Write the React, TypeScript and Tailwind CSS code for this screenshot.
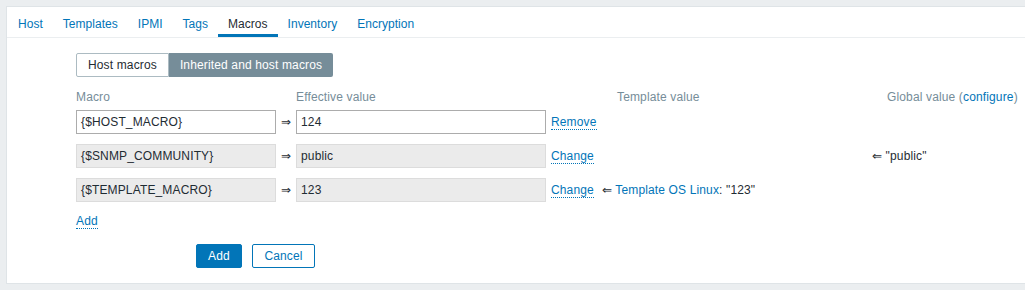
import React from "react";

const tabs = ["Host", "Templates", "IPMI", "Tags", "Macros", "Inventory", "Encryption"];

function Link({ children }: { children: React.ReactNode }) {
  return (
    <span className="text-[#0275b8] border-b border-dotted border-[#0275b8] leading-[14px] cursor-pointer">
      {children}
    </span>
  );
}

function Field({ value, width, disabled }: { value: string; width: string; disabled?: boolean }) {
  return (
    <div
      className={
        "h-6 flex items-center px-[4px] border " +
        width +
        (disabled ? " bg-[#ebebeb] border-[#dcdcdc]" : " bg-white border-[#acacac]")
      }
    >
      {value}
    </div>
  );
}

export default function App() {
  return (
    <div
      className="min-h-[290px] bg-[#ebeef0] pt-[6px] pl-[6px] text-[12px] tracking-[0.14px] text-[#1f2c33]"
      style={{ fontFamily: '"Liberation Sans", Arial, sans-serif' }}
    >
      <div className="bg-white border border-r-0 border-[#dfe4e7] h-[278px]">
        {/* tabs */}
        <div className="flex h-[31px] border-b border-[#ebeef0] pl-px tracking-[0.03px]">
          {tabs.map((t) => (
            <div
              key={t}
              className={
                "px-[10px] flex items-center border-b-[3px] " +
                (t === "Macros" ? "border-[#0275b8] text-[#1f2c33]" : "border-transparent text-[#0275b8]")
              }
            >
              <span className="mt-[7px]">{t}</span>
            </div>
          ))}
        </div>

        <div className="pl-[69px] pt-[15px]">
          {/* toggle */}
          <div className="flex h-6">
            <div className="px-[11px] flex items-center border border-[#acbbc2] rounded-l-[2px]">Host macros</div>
            <div className="px-[11px] flex items-center bg-[#768d99] text-white rounded-r-[2px]">Inherited and host macros</div>
          </div>

          {/* header */}
          <div className="flex mt-[12px] h-[16px] items-center text-[#768d99]">
            <div className="w-[220px]">Macro</div>
            <div className="w-[321px]">Effective value</div>
            <div className="w-[270px]">Template value</div>
            <div>
              Global value (<span className="text-[#0275b8]">configure</span>)
            </div>
          </div>

          {/* rows */}
          <div className="flex flex-col gap-[10px] mt-[5px]">
            <div className="flex items-center">
              <Field value="{$HOST_MACRO}" width="w-[200px]" />
              <div className="w-[20px] text-center">⇒</div>
              <Field value="124" width="w-[250px]" />
              <div className="pl-[5px]">
                <Link>Remove</Link>
              </div>
            </div>
            <div className="flex items-center">
              <Field value="{$SNMP_COMMUNITY}" width="w-[200px]" disabled />
              <div className="w-[20px] text-center">⇒</div>
              <Field value="public" width="w-[250px]" disabled />
              <div className="pl-[5px] w-[326px]">
                <Link>Change</Link>
              </div>
              <div>⇐ "public"</div>
            </div>
            <div className="flex items-center">
              <Field value="{$TEMPLATE_MACRO}" width="w-[200px]" disabled />
              <div className="w-[20px] text-center">⇒</div>
              <Field value="123" width="w-[250px]" disabled />
              <div className="pl-[5px]">
                <Link>Change</Link>
              </div>
              <div className="ml-[8px]">
                ⇐ <span className="text-[#0275b8]">Template OS Linux</span>: "123"
              </div>
            </div>
          </div>

          <div className="mt-[10px] h-[16px]">
            <Link>Add</Link>
          </div>

          {/* buttons */}
          <div className="flex gap-[10px] mt-[16px] pl-[120px]">
            <button className="h-6 w-[46px] bg-[#0275b8] text-white rounded-[2px] border border-[#0275b8]">Add</button>
            <button className="h-6 w-[63px] bg-white text-[#0275b8] rounded-[2px] border border-[#0275b8]">Cancel</button>
          </div>
        </div>
      </div>
    </div>
  );
}
